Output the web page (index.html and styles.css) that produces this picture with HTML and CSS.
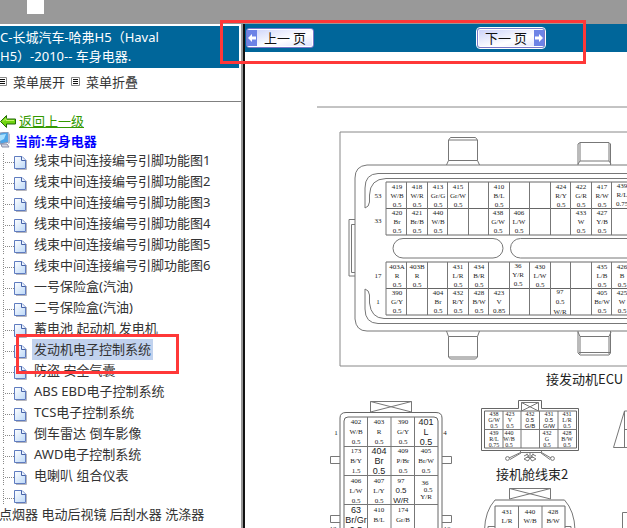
FILE: index.html
```html
<!DOCTYPE html>
<html lang="zh-CN">

<head>
    <meta charset="UTF-8">
    <meta name="viewport" content="width=device-width, initial-scale=1.0">
    <title>车身电器</title>
    <link rel="stylesheet" href="styles.css">
</head>

<body>
    <svg class="sprite" aria-hidden="true">
        <defs>
            <linearGradient id="paper" x1="0" y1="0" x2="1" y2="1">
                <stop offset="0" stop-color="#ffffff" />
                <stop offset="1" stop-color="#bcd8f8" />
            </linearGradient>
        </defs>
        <symbol id="page" viewBox="0 0 13 15">
            <path d="M2 14.5H12.5V5" fill="none" stroke="#b5b5bd" />
            <path d="M.5 1.5H8L11.5 5V13.5H.5Z" fill="url(#paper)" stroke="#5f7cc0" />
            <path d="M7.5 1.5V5.5H11.5" fill="#eef5ff" stroke="#4763a8" />
        </symbol>
        <symbol id="list" viewBox="0 0 9 9">
            <path d="M.5.5H8.5V8.5H.5Z" fill="#fff" stroke="#888" />
            <path d="M2 2.5H7M2 4.5H7M2 6.5H7" stroke="#111" />
        </symbol>
    </svg>

    <div class="topbar"><span class="tab"></span></div>

    <div class="frames">
        <aside class="sidebar">
            <h1 class="title">C-长城汽车-哈弗H5（Haval H5）-2010-- 车身电器.</h1>
            <div class="menu-tools">
                <svg class="list-icon"><use href="#list" /></svg>
                <a href="#open">菜单展开</a>
                <svg class="list-icon"><use href="#list" /></svg>
                <a href="#close">菜单折叠</a>
            </div>
            <div class="back">
                <svg width="16" height="15" viewBox="0 0 16 15">
                    <path d="M.5 8.500L6.500 2.500V6H15.500V11H6.500V14.500Z" fill="#6fd40f" stroke="#23690a" />
                    <path d="M3 8.500L6 5.500V7.500H14" fill="none" stroke="#c5f56b" />
                </svg>
                <a href="#back">返回上一级</a>
            </div>
            <div class="current">
                <svg width="11" height="16" viewBox="0 0 11 16">
                    <path d="M0 1L8 0L9 10L0 12Z" fill="#4aa5e8" stroke="#8c97b4" />
                    <path d="M0 3L6 2L4 7L0 9Z" fill="#a9e1ff" />
                    <path d="M8 1L10 2V11L8 12Z" fill="#b4bad0" />
                    <path d="M1 12H7L9 15H2Z" fill="#d3d5e2" stroke="#8a8fa8" />
                </svg>
                <span>当前:车身电器</span>
            </div>
            <ul class="tree">
                <li><svg><use href="#page" /></svg><a href="#1">线束中间连接编号引脚功能图1</a></li>
                <li><svg><use href="#page" /></svg><a href="#2">线束中间连接编号引脚功能图2</a></li>
                <li><svg><use href="#page" /></svg><a href="#3">线束中间连接编号引脚功能图3</a></li>
                <li><svg><use href="#page" /></svg><a href="#4">线束中间连接编号引脚功能图4</a></li>
                <li><svg><use href="#page" /></svg><a href="#5">线束中间连接编号引脚功能图5</a></li>
                <li><svg><use href="#page" /></svg><a href="#6">线束中间连接编号引脚功能图6</a></li>
                <li><svg><use href="#page" /></svg><a href="#7">一号保险盒(汽油)</a></li>
                <li><svg><use href="#page" /></svg><a href="#8">二号保险盒(汽油)</a></li>
                <li><svg><use href="#page" /></svg><a href="#9">蓄电池 起动机 发电机</a></li>
                <li class="selected"><svg><use href="#page" /></svg><a href="#10">发动机电子控制系统</a><span class="mark mark-item"></span></li>
                <li><svg><use href="#page" /></svg><a href="#11">防盗 安全气囊</a></li>
                <li><svg><use href="#page" /></svg><a href="#12">ABS EBD电子控制系统</a></li>
                <li><svg><use href="#page" /></svg><a href="#13">TCS电子控制系统</a></li>
                <li><svg><use href="#page" /></svg><a href="#14">倒车雷达 倒车影像</a></li>
                <li><svg><use href="#page" /></svg><a href="#15">AWD电子控制系统</a></li>
                <li><svg><use href="#page" /></svg><a href="#16">电喇叭 组合仪表</a></li>
                <li class="short"><svg><use href="#page" /></svg></li>
                <li class="wrapped"><a href="#17">点烟器 电动后视镜 后刮水器 洗涤器</a></li>
                <li></li>
            </ul>
        </aside>

        <main class="content">
            <div class="pager">
                <button type="button" class="page-button">
                    <svg width="10" height="16" viewBox="0 0 10 16">
                        <path d="M0 0H10V16H0Z" fill="#6d83e6" />
                        <path d="M1 8L5 4V6.500H9V9.500H5V12Z" fill="#fff" />
                    </svg>
                    <span>上一 页</span>
                </button>
                <button type="button" class="page-button next">
                    <span>下一 页</span>
                    <svg width="10" height="16" viewBox="0 0 10 16">
                        <path d="M0 0H10V16H0Z" fill="#6d83e6" />
                        <path d="M9 8L5 4V6.500H1V9.500H5V12Z" fill="#fff" />
                    </svg>
                </button>
                <span class="mark mark-pager"></span>
            </div>

            <svg class="diagram" id="diagram" viewBox="245 52 382 476" preserveAspectRatio="xMinYMin slice">
                <path class="rule" d="M317 107H900" />

                <!-- ECU connector -->
                <path class="frame" d="M900 132H340V366H900" />
                <path d="M900 165H367Q355 166 355 178V319Q356 331 367 331H900" />
                <path d="M900 173.500H378Q365 174 365 188V208Q369 207 369.500 202V195Q370 179 386 178.500H900" />
                <path d="M900 323.500H378Q365 323 365 309V289Q369 290 369.500 295V303Q371 318 384 318.500H900" />
                <path d="M355 219.500H349V276H355M355 224.500H351.500V272.500H355" />
                <path d="M446.500 165L448.500 160.500V140L450.500 137.500H475.500L477.500 140V160.500L479.500 165M448.500 160.500H477.500M449 140H477" />
                <path d="M578 165V144L580 142.500H609L610.500 144V165M580 143V161H609V143M578 164L580 161M611 164L609 161" />
                <path d="M446.500 331L448.500 336.500V357L450.500 359H475.500L477.500 357V336.500L479.500 331M448.500 336.500H477.500M449 357H477" />
                <path d="M578 331V353L580 355H609L610.500 353V331M580 354V336.500H609V354M578 332L580 336.500M611 332L609 336.500M579 352.500H610" />
                <rect x="393" y="238.500" width="110" height="19.500" rx="10" />
                <rect x="510.500" y="238.500" width="200" height="19.500" rx="10" />
                <path class="grid" d="M386 182H900M386 208.500H900M386 235H900M386 262H900M386 288.500H900M386 315H900" />
                <path d="M406.500 182V235M427.500 182V235M447.500 182V235M468.500 182V235M488.500 182V235M509.500 182V235M529.500 182V235M550.500 182V235M570.500 182V235M591.500 182V235M611.500 182V235M386 182V235" />
                <path d="M406.500 262V315M427.500 262V315M447.500 262V315M468.500 262V315M488.500 262V315M509.500 262V315M529.500 262V315M550.500 262V315M570.500 262V315M591.500 262V315M611.500 262V315M386 262V315" />
                <text class="pin" x="378" y="198">53</text>
                <text class="pin" x="378" y="223">33</text>
                <text class="pin" x="378" y="278">17</text>
                <text class="pin" x="378" y="304">1</text>
                <text class="caption" x="546" y="384">接发动机ECU</text>

                <!-- 16 pin connector -->
                <path class="grid" d="M340 600V418Q340 412.500 346 412.500H436Q442 412.500 442 418V600" />
                <path class="grid" d="M344 600V421Q344 417 348 417H434Q438 417 438 421V600" />
                <path d="M367.500 417V600M391 417V600M414.500 417V600M344 446.500H438M344 475.500H438M344 504.500H438" />
                <path d="M370.500 412V401.500H411.500V412M370.500 401.500L411.500 412M411.500 401.500L370.500 412" />
                <path d="M340 456.500H330.500V463.500H340M442 456.500H451.500V463.500H442M340 515.500H330.500V522.500H340M442 515.500H451.500V522.500H442" />
                <text class="pin" x="336" y="435">1</text>
                <text class="pin" x="445" y="435">4</text>
                <text class="pin" x="333" y="531">13</text>
                <text class="pin" x="447" y="531">16</text>

                <!-- engine room harness 2 -->
                <path class="grid" d="M518.500 408.500H481.500V450.500H578.500V408.500H541.500V400.500H518.500Z" />
                <path class="grid" d="M484.500 411H576.500V448H484.500Z" />
                <path d="M503 411V448M521 411V448M539.500 411V448M558 411V448M484.500 429.500H576.500M521.500 411V402.500H538.500V411M521.500 402.500L538.500 411M538.500 402.500L521.500 411" />
                <path d="M520.500 451V452.500L509 458M521 453L510 459.500M541.500 451V452.500L551 458M541 453L550 459.500M520.500 452.500H541.500" />
                <circle cx="507.500" cy="458.500" r="1.900" />
                <circle cx="552.500" cy="458.500" r="1.900" />
                <path d="M530 452V459M526 454L529 456L524 459L528 461L530 458L527 457M534 454L531 456L536 459L532 461L530 458L533 457M524 456L528 454M536 456L532 454" />
                <text class="caption" x="496" y="479">接机舱线束2</text>
                <path d="M900 411H624.500L613.500 447.500H900M624.500 411V447.500M624.500 429.500H900" />

                <!-- lower connector -->
                <path d="M509.500 499V488.500H550.500V499M509.500 488.500L550.500 499M550.500 488.500L509.500 499" />
                <path class="grid" d="M495 600V506H565V600M495 500H564.500" />
                <path d="M495 500Q485 511 484.500 530M564.500 500Q574.500 511 575 530M518.500 506V600M542 506V600M488 528V526.500H495M565 526.500H571V528" />
                <path d="M900 512.500H622.500V600" />
            </svg>
        </main>
    </div>

    <script>
        // Wire labels: [centre x, baseline of first line, line step, lines, class]
        const cells = [
            [397, 189, 9, "419 W/B 0.5"], [417, 189, 9, "418 W/R 0.5"],
            [438, 189, 9, "413 Gr/G 0.5"], [458, 189, 9, "415 Gr/W 0.5"],
            [499, 189, 9, "410 B/L 0.5"], [561, 189, 9, "424 R/Y 0.5"],
            [581, 189, 9, "422 G/R 0.5"], [602, 189, 9, "417 R/W 0.5"],
            [622, 188, 9, "439 R/L 0.75"],
            [397, 215, 9, "420 Br 0.5"], [417, 215, 9, "421 Br/B 0.5"],
            [438, 215, 9, "440 W/B 0.5"], [498, 215, 9, "438 G/W 0.5"],
            [519, 215, 9, "406 L/W 0.5"], [581, 215, 9, "433 W 0.5"],
            [602, 215, 9, "427 Y/B 0.5"],
            [397, 269, 9, "403A R 0.5"], [417, 269, 9, "403B R 0.5"],
            [458, 269, 9, "431 L/R 0.5"], [479, 269, 9, "434 B/R 0.5"],
            [518, 268, 9, "36 Y/R 0.5"], [540, 269, 9, "430 L/W 0.5"],
            [602, 269, 9, "435 L/B 0.5"], [622, 269, 9, "426 B 0.5"],
            [397, 295, 9, "390 G/Y 0.5"], [438, 295, 9, "404 Br 0.5"],
            [458, 295, 9, "432 R/Y 0.5"], [479, 295, 9, "428 B/W 0.5"],
            [499, 295, 9, "423 V 0.85"], [560, 294, 10, "97 0.5 W/R"],
            [602, 295, 9, "405 Br/W 0.5"], [622, 295, 9, "425 W 0.5"],

            [356, 424, 10, "402 W/B 0.5"], [379, 424, 10, "403 R 0.5"],
            [403, 424, 10, "390 G/Y 0.5"], [426, 425, 10, "401 L 0.5", "big"],
            [356, 453, 10, "173 B/Y 1.5"], [379, 454, 10, "404 Br 0.5", "big"],
            [403, 453, 10, "409 P/Br 0.5"], [426, 453, 10, "405 Br/W 0.5"],
            [356, 483, 10, "406 L/W 0.5"], [379, 483, 10, "407 L/Y 0.5"],
            [401, 483, 0, "97"], [401, 493, 10, "0.5 W/R", "dark"],
            [425, 485, 0, "36", "plain"], [428, 492, 0, "0.5", "plain"],
            [426, 499, 0, "Y/R", "plain"],
            [356, 513, 10, "63 Br/Gr 0.5", "big"], [379, 512, 10, "410 B/L 0.5"],
            [403, 512, 10, "174 Gr/B 1.0"],

            [494, 416, 6, "438 G/W 0.5", "small"], [510, 416, 6, "423 V 0.5", "small"],
            [530, 416, 0, "432", "small"], [530, 422, 6, "0.5 G/B", "small dark"],
            [549, 416, 0, "431", "small"], [549, 422, 6, "0.5 G/W", "small dark"],
            [567, 416, 6, "431 L/R 0.5", "small"],
            [494, 435, 6, "439 R/L 0.75", "small"], [509, 435, 6, "440 W/B 0.5", "small"],
            [547, 435, 6, "432 G 0.5", "small"], [567, 435, 6, "428 B/W 0.5", "small"],

            [507, 514, 9, "431 L/R 0.5"], [530, 514, 9, "440 W/B 0.5"],
            [553, 514, 9, "428 B/W 0.5"]
        ];

        const diagram = document.getElementById("diagram");
        cells.forEach(([x, y, step, lines, type]) => {
            lines.split(" ").forEach((line, i) => {
                const text = document.createElementNS("http://www.w3.org/2000/svg", "text");
                text.setAttribute("class", "pin " + (type || ""));
                text.setAttribute("x", x);
                text.setAttribute("y", y + i * step);
                text.textContent = line;
                diagram.appendChild(text);
            });
        });
    </script>
</body>

</html>
```
FILE: styles.css
```css
* {
    box-sizing: border-box;
}

body {
    display: flex;
    flex-direction: column;
    height: 100vh;
    margin: 0;
    overflow: hidden;
    font-family: "Noto Sans", "Noto Sans CJK SC", sans-serif;
    font-size: 13px;
    color: #333;
    background: #fff;
}

a {
    color: inherit;
    text-decoration: none;
}

.sprite {
    position: absolute;
    width: 0;
    height: 0;
}

.topbar {
    flex: none;
    height: 24px;
    padding-left: 27px;
    background: #999;
}

.tab {
    display: block;
    width: 17px;
    height: 14px;
    background: #fff;
}

.frames {
    display: flex;
    flex: 1;
    min-height: 0;
}

/* left menu */
.sidebar {
    flex: none;
    width: 245px;
    padding-top: 2px;
    border-right: 2px solid #111;
    box-shadow: inset -2px 0 #999;
}

.title {
    margin: 0 4px 0 0;
    padding: 2px 60px 2px 0;
    font-size: 13px;
    font-weight: normal;
    line-height: 19px;
    color: #fff;
    background: #00669a;
}

.menu-tools {
    display: flex;
    align-items: center;
    gap: 6px;
    height: 34px;
    margin-right: 2px;
    padding-bottom: 6px;
    border-bottom: 1px solid #808080;
}

.list-icon {
    width: 9px;
    height: 9px;
}

.list-icon:first-child {
    margin-left: -2px;
}

.back {
    display: flex;
    align-items: center;
    gap: 3px;
    height: 20px;
    margin-top: 8px;
    color: #390;
}

.back a {
    text-decoration: underline;
}

.current {
    display: flex;
    align-items: center;
    gap: 4px;
    height: 20px;
    font-weight: bold;
    color: #00f;
}

.tree {
    margin: 0;
    padding: 0;
    list-style: none;
}

.tree li {
    position: relative;
    display: flex;
    align-items: center;
    height: 21px;
    padding-left: 14px;
    background:
        repeating-linear-gradient(to bottom, #888 0 1px, transparent 1px 2px) 3px 3px / 1px 17px no-repeat,
        repeating-linear-gradient(to right, #888 0 1px, transparent 1px 2px) 5px 12px / 9px 1px no-repeat;
}

.tree svg {
    width: 13px;
    height: 15px;
    margin-top: 3px;
}

.tree a {
    margin-left: 5px;
    padding: 0 2px;
    line-height: 21px;
    white-space: nowrap;
}

.tree .selected a {
    background: #c1d2ee;
}

.tree .short {
    height: 18px;
}

.tree .wrapped {
    padding: 0;
    background: none;
}

.tree .wrapped a {
    margin-left: -3px;
}

/* right page */
.content {
    display: flex;
    flex: 1;
    flex-direction: column;
    min-width: 0;
}

.pager {
    position: relative;
    display: flex;
    flex: none;
    align-items: center;
    gap: 163px;
    height: 28px;
    padding-left: 1px;
    background: #00669a;
}

.page-button {
    display: flex;
    align-items: center;
    width: 68px;
    height: 20px;
    padding: 0;
    border: 1px solid #7a78c8;
    border-radius: 3px;
    font-family: "Noto Sans CJK SC", sans-serif;
    font-size: 13px;
    line-height: 16px;
    color: #111;
    background: linear-gradient(to bottom right, #c9d0fa, #fff 60%, #dcdffc);
    box-shadow: inset 0 0 0 1px #fff;
    cursor: pointer;
}

.page-button span {
    flex: 1;
    text-align: center;
}

.next {
    outline: 1px solid #fff;
}

.diagram {
    flex: 1;
    width: 100%;
    min-height: 0;
    fill: none;
    stroke: #777;
    stroke-width: 1px;
}

.rule,
.frame {
    stroke: #888;
}

.grid {
    stroke: #666;
}

.diagram text {
    stroke: none;
    fill: #222;
}

.pin {
    font-family: "Liberation Serif", serif;
    font-size: 7px;
    text-anchor: middle;
}

.big,
.dark {
    font-family: "Liberation Sans", sans-serif;
}

.big {
    font-size: 9px;
}

.dark {
    font-size: 8px;
}

.small {
    font-size: 6px;
}

.caption {
    font-family: "Noto Sans CJK SC", sans-serif;
    font-size: 13px;
}

/* red highlight boxes */
.mark {
    position: absolute;
    border: 3px solid #ff3838;
    pointer-events: none;
}

.mark-pager {
    top: -4px;
    left: -25px;
    width: 366px;
    height: 44px;
}

.mark-item {
    z-index: 1;
    top: -5px;
    left: 16px;
    width: 163px;
    height: 40px;
}
```
